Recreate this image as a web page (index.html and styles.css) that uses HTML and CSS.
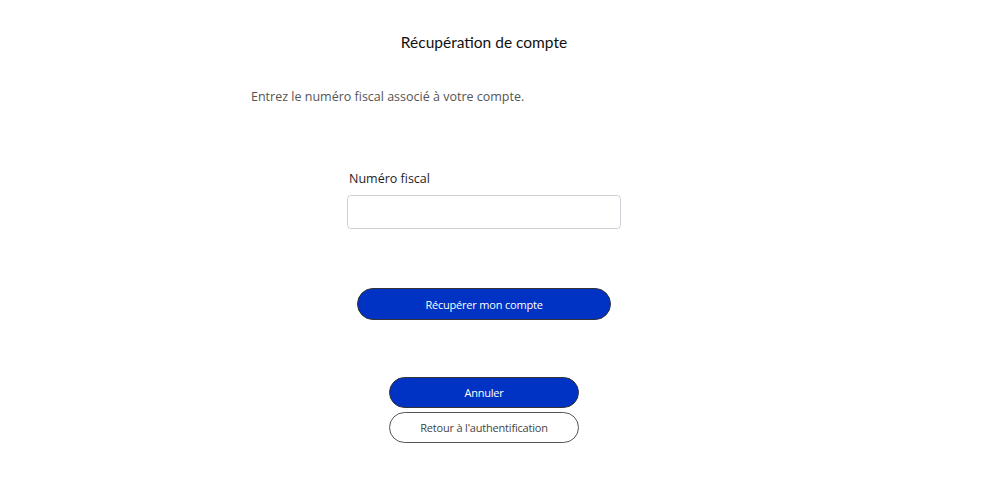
FILE: index.html
```html
<!DOCTYPE html>
<html lang="fr">
<head>
<meta charset="utf-8">
<title>Récupération de compte</title>
<link rel="stylesheet" href="styles.css">
</head>
<body>
<main class="page">
  <h1 class="title">Récupération de compte</h1>
  <p class="intro">Entrez le numéro fiscal associé à votre compte.</p>
  <form class="form">
    <div class="field">
      <label class="label" for="nf">Numéro fiscal</label>
      <input class="input" id="nf" type="text">
    </div>
    <button type="button" class="btn btn-primary btn-wide">Récupérer mon compte</button>
    <div class="actions">
      <button type="button" class="btn btn-primary btn-small">Annuler</button>
      <button type="button" class="btn btn-outline btn-small">Retour à l'authentification</button>
    </div>
  </form>
</main>
</body>
</html>
```

FILE: styles.css
```css
html, body {
  margin: 0;
  padding: 0;
  background: #ffffff;
}
body {
  font-family: "Open Sans", "Liberation Sans", sans-serif;
  color: #222;
}
.page {
  width: 968px;
  display: flex;
  flex-direction: column;
  align-items: center;
}
.title {
  margin: 33px 0 0;
  font-family: "Lato", "Liberation Sans", sans-serif;
  font-size: 15.5px;
  font-weight: 400;
  color: #111;
  line-height: 18px;
}
.intro {
  width: 466px;
  margin: 37px 0 0;
  font-family: "Open Sans", "Liberation Sans", sans-serif;
  font-size: 12.5px;
  line-height: 18px;
  color: #555;
}
.form {
  display: flex;
  flex-direction: column;
  align-items: center;
  margin-top: 64px;
}
.field {
  display: flex;
  flex-direction: column;
  width: 274px;
}
.label {
  font-size: 12.5px;
  line-height: 18px;
  color: #1e1e1e;
  padding-left: 2px;
  margin-bottom: 7px;
}
.input {
  box-sizing: border-box;
  height: 34px;
  width: 274px;
  border: 1.5px solid #d0d0d8;
  border-radius: 4px;
  background: #fff;
}
.btn {
  box-sizing: border-box;
  font-family: "Open Sans", "Liberation Sans", sans-serif;
  font-size: 11px;
  letter-spacing: -0.2px;
  border-radius: 16px;
  cursor: pointer;
  padding: 0;
}
.btn-primary {
  background: #0033c4;
  color: #ffffff;
  border: 1.5px solid #333333;
}
.btn-outline {
  background: #ffffff;
  color: #444444;
  border: 1.5px solid #555555;
}
.btn-wide {
  width: 254px;
  height: 32px;
  margin-top: 59px;
}
.actions {
  display: flex;
  flex-direction: column;
  gap: 4px;
  margin-top: 57px;
}
.btn-small {
  width: 190px;
  height: 31px;
}
```
